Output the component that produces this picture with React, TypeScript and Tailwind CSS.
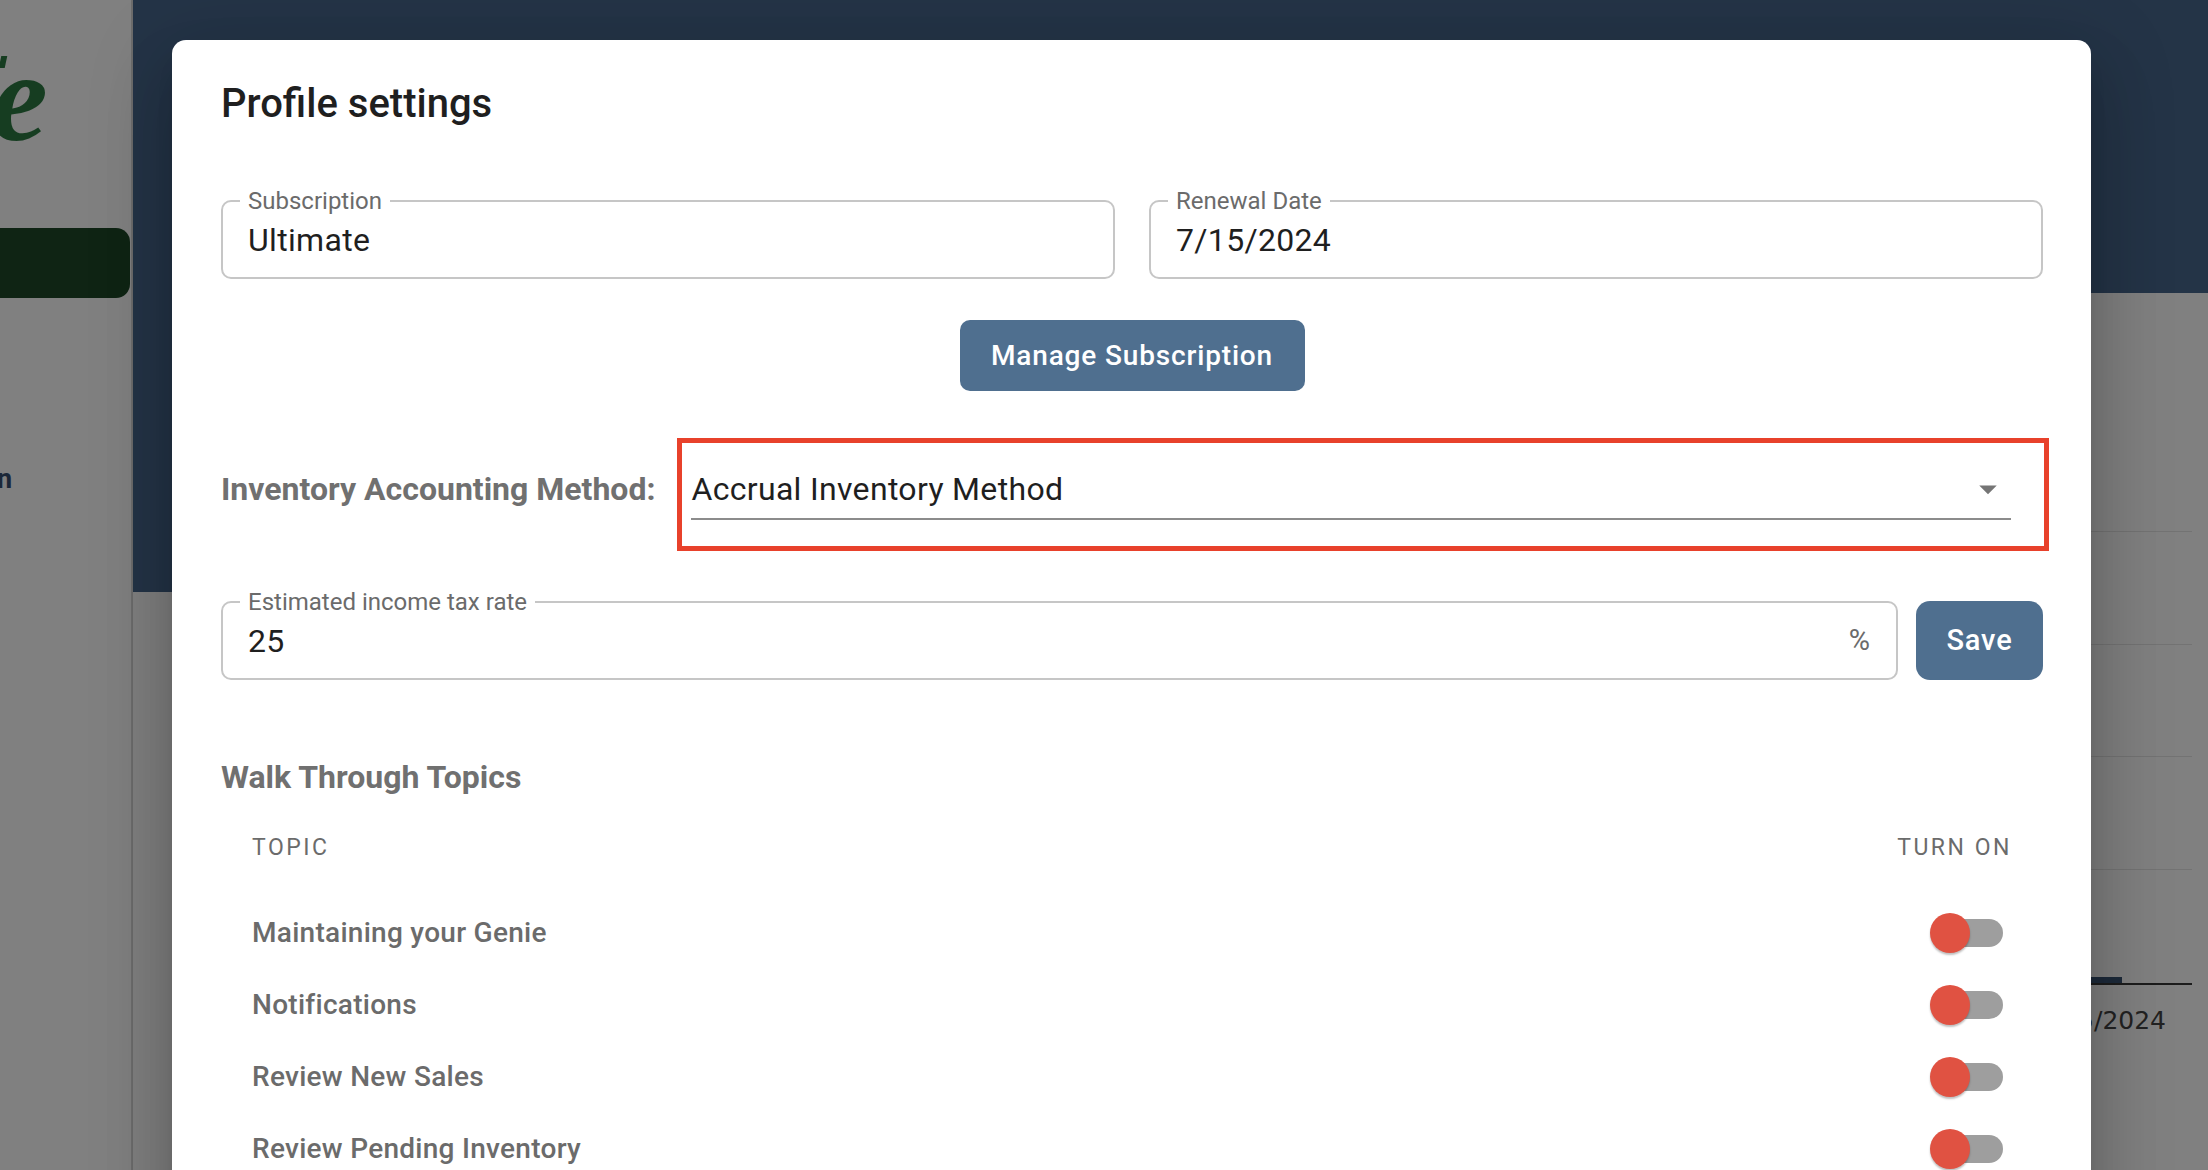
import React, { useState } from 'react';

interface FieldProps {
    label: string;
    value: string;
    suffix?: string;
    className?: string;
}

const OutlinedField: React.FC<FieldProps> = ({ label, value, suffix, className }) => {
    return (
        <div className={`relative h-[79px] rounded-[10px] border-2 border-[#c6c6c6] flex items-center pl-[25px] pr-[26px] ${className ?? ''}`}>
            <span className="absolute -top-[15px] left-[17px] bg-white px-[8px] text-[24px] leading-[28px] text-[#6b6b6b]">
                {label}
            </span>
            <span className="flex-1 text-[32px] tracking-[0.01em] text-[#1f1f1f]">{value}</span>
            {suffix && <span className="text-[29px] text-[#6b6b6b]">{suffix}</span>}
        </div>
    );
};

const Toggle: React.FC<{ on: boolean; onChange: () => void }> = ({ on, onChange }) => {
    return (
        <button onClick={onChange} className="relative w-[73px] h-[40px] mr-[6px]">
            <span className={`absolute left-[6px] right-0 top-[6px] h-[28px] rounded-full ${on ? 'bg-[#f0a59b]' : 'bg-[#9e9e9e]'}`} />
            <span
                className={`absolute top-0 w-[40px] h-[40px] rounded-full bg-[#e05242] shadow-[0_2px_2px_rgba(0,0,0,0.25)] ${on ? 'left-[33px]' : 'left-0'}`}
            />
        </button>
    );
};

const topics = ['Maintaining your Genie', 'Notifications', 'Review New Sales', 'Review Pending Inventory'];

const App: React.FC = () => {
    const [enabled, setEnabled] = useState<boolean[]>([false, false, false, false]);

    const toggle = (i: number) => {
        setEnabled(prev => prev.map((v, idx) => (idx === i ? !v : v)));
    };

    return (
        <div className="relative w-[2208px] h-[1170px] overflow-hidden flex bg-[#808080] font-['Roboto',sans-serif]">
            {/* Sidebar (behind backdrop) */}
            <aside className="w-[133px] h-full flex-shrink-0 border-r-2 border-[#6c6c6c] bg-[#808080] overflow-hidden">
                <div className="h-[228px] relative">
                    <span className="absolute left-0 top-[56px] w-[6px] h-[12px] bg-[#163d21] -skew-x-12" />
                    <span className="absolute -left-[9px] top-[33px] font-['Liberation_Serif',serif] italic font-bold text-[128px] leading-none text-[#163d21]">
                        e
                    </span>
                </div>
                <div className="h-[70px] w-[130px] rounded-r-[14px] bg-[#0f2414]" />
                <div className="mt-[168px] -ml-[3px] text-[27px] font-bold text-[#1b2738] leading-none">n</div>
            </aside>

            {/* Main area (behind backdrop) */}
            <main className="flex-1 flex flex-col">
                <div className="h-[293px] bg-[#243447]" />
                <div className="flex-1 flex">
                    <div className="w-[40px] h-[299px] bg-[#243447]" />
                    <div className="flex-1 pr-[16px] flex flex-col">
                        <div className="h-[239px] border-b border-[#737373]" />
                        <div className="h-[113px] border-b border-[#737373]" />
                        <div className="h-[112px] border-b border-[#737373]" />
                        <div className="h-[113px] border-b border-[#737373]" />
                        <div className="h-[115px] border-b-2 border-[#1c1c1c] flex items-end justify-end">
                            <div className="w-[300px] h-[6px] bg-[#1d2a3a] mr-[70px]" />
                        </div>
                        <div className="flex justify-end pr-[26px] pt-[17px] font-['DejaVu_Sans',sans-serif] text-[25px] text-[#222]">
                            7/15/2024
                        </div>
                    </div>
                </div>
            </main>

            {/* Dialog */}
            <div className="absolute left-[172px] top-[40px] w-[1919px] h-[1200px] rounded-[14px] bg-white pt-[40px] pl-[49px] pr-[48px] shadow-[0_19px_26px_-12px_rgba(0,0,0,0.2),0_42px_66px_5px_rgba(0,0,0,0.14),0_16px_80px_14px_rgba(0,0,0,0.12)]">
                <h1 className="h-[48px] leading-[48px] text-[40px] font-medium text-[#1f1f1f]">Profile settings</h1>

                <div className="mt-[72px] grid grid-cols-2 gap-[34px]">
                    <OutlinedField label="Subscription" value="Ultimate" />
                    <OutlinedField label="Renewal Date" value="7/15/2024" />
                </div>

                <div className="mt-[41px] flex justify-center">
                    <button className="w-[345px] h-[71px] rounded-[10px] bg-[#4f6f8f] text-white text-[28px] font-medium tracking-[0.03em]">
                        Manage Subscription
                    </button>
                </div>

                <div className="mt-[47px] flex items-start gap-[22px]">
                    <span className="mt-[31px] h-[40px] leading-[40px] text-[32px] font-bold text-[#707070] whitespace-nowrap">
                        Inventory Accounting Method:
                    </span>
                    <div className="flex-1 -mr-[6px] h-[113px] border-[5px] border-[#e8412b] pt-[26px] pl-[9px] pr-[33px]">
                        <div className="h-[51px] border-b-2 border-[#8c8c8c] flex items-start">
                            <span className="flex-1 h-[40px] leading-[40px] text-[32px] tracking-[0.01em] text-[#1f1f1f]">
                                Accrual Inventory Method
                            </span>
                            <svg viewBox="0 0 24 24" className="w-[42px] h-[42px] -mt-[1px] mr-[2px]" fill="#757575">
                                <path d="M7 10l5 5 5-5z" />
                            </svg>
                        </div>
                    </div>
                </div>

                <div className="mt-[50px] flex gap-[18px]">
                    <OutlinedField className="flex-1" label="Estimated income tax rate" value="25" suffix="%" />
                    <button className="w-[127px] h-[79px] rounded-[14px] bg-[#4f6f8f] text-white text-[29px] font-medium tracking-[0.03em]">
                        Save
                    </button>
                </div>

                <h2 className="mt-[77px] h-[40px] leading-[40px] text-[32px] font-bold text-[#707070]">Walk Through Topics</h2>

                <div className="mt-[23px] pl-[31px] pr-[34px]">
                    <div className="h-[56px] flex items-center justify-between text-[23px] tracking-[0.11em] text-[#6b6b6b]">
                        <span>TOPIC</span>
                        <span className="-mr-[3px]">TURN ON</span>
                    </div>
                    <div className="pt-[21px]">
                        {topics.map((t, i) => (
                            <div key={t} className="h-[72px] flex items-center justify-between">
                                <span className="text-[28px] font-medium tracking-[0.01em] text-[#6b6b6b]">{t}</span>
                                <Toggle on={enabled[i]} onChange={() => toggle(i)} />
                            </div>
                        ))}
                    </div>
                </div>
            </div>
        </div>
    );
};

export default App;
